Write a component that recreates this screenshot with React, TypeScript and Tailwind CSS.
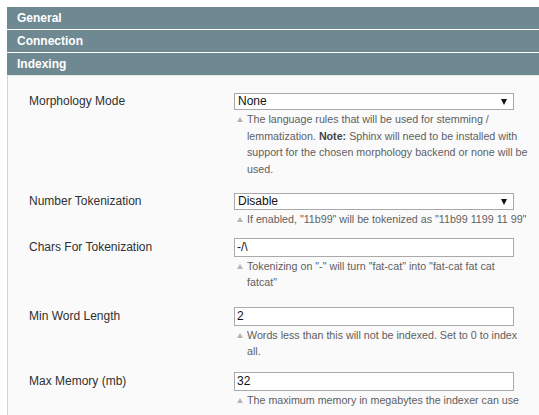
import React from "react";

type Row = {
  label: string;
  kind: "select" | "input";
  value: string;
  lines: React.ReactNode[];
  pad: string;
};

const rows: Row[] = [
  {
    label: "Morphology Mode",
    kind: "select",
    value: "None",
    lines: [
      "The language rules that will be used for stemming /",
      <>
        lemmatization. <b className="font-bold text-[#444]">Note:</b> Sphinx will need to be installed with
      </>,
      "support for the chosen morphology backend or none will be",
      "used.",
    ],
    pad: "pb-[16px]",
  },
  {
    label: "Number Tokenization",
    kind: "select",
    value: "Disable",
    lines: ['If enabled, "11b99" will be tokenized as "11b99 1199 11 99"'],
    pad: "pb-[10px]",
  },
  {
    label: "Chars For Tokenization",
    kind: "input",
    value: "-/\\",
    lines: ['Tokenizing on "-" will turn "fat-cat" into "fat-cat fat cat', 'fatcat"'],
    pad: "pb-[16px]",
  },
  {
    label: "Min Word Length",
    kind: "input",
    value: "2",
    lines: ["Words less than this will not be indexed. Set to 0 to index", "all."],
    pad: "pb-[12px]",
  },
  {
    label: "Max Memory (mb)",
    kind: "input",
    value: "32",
    lines: ["The maximum memory in megabytes the indexer can use"],
    pad: "pb-[10px]",
  },
];

function SectionBar({ title }: { title: string }) {
  return (
    <div className="h-[22px] bg-[#6f8992] pl-[10px] text-[12px] font-bold leading-[22px] text-white">
      {title}
    </div>
  );
}

function Field({ row }: { row: Row }) {
  if (row.kind === "select") {
    return (
      <div className="flex h-[17px] w-[280px] items-center justify-between border border-[#a9a9a9] bg-white pl-[3px] pr-[6px] text-[12px] leading-[15px] text-[#111]">
        <span>{row.value}</span>
        <span className="h-0 w-0 border-x-[3.5px] border-t-[6px] border-x-transparent border-t-[#111]" />
      </div>
    );
  }
  return (
    <div className="h-[19px] w-[280px] border border-[#aaaaaa] bg-white pl-[2px] text-[12px] leading-[17px] text-[#111]">
      {row.value}
    </div>
  );
}

export default function App() {
  return (
    <div
      className="min-h-[415px] bg-white pl-[7px] pt-[7px]"
      style={{ fontFamily: '"Liberation Sans", Arial, sans-serif' }}
    >
      <div className="flex flex-col gap-[1px]">
        <SectionBar title="General" />
        <SectionBar title="Connection" />
        <SectionBar title="Indexing" />
      </div>
      <div className="border-l border-t border-l-[#d4d4d4] border-t-[#e3e8ea] bg-[#fafafa] pl-[21px] pt-[17px]">
        {rows.map((row) => (
          <div key={row.label} className={`grid grid-cols-[205px_1fr] ${row.pad}`}>
            <div
              className={`text-[12px] text-[#303030] ${row.kind === "select" ? "leading-[17px]" : "leading-[19px]"}`}
            >
              {row.label}
            </div>
            <div>
              <Field row={row} />
              <div className="relative mt-[1px] pl-[13px] text-[10.7px] leading-[16.5px] text-[#5f5f5f]">
                <span className="absolute left-[3px] top-[6px] h-0 w-0 border-x-[3px] border-b-[5px] border-x-transparent border-b-[#b5b5b5]" />
                {row.lines.map((line, i) => (
                  <div key={i} className="whitespace-nowrap">
                    {line}
                  </div>
                ))}
              </div>
            </div>
          </div>
        ))}
      </div>
    </div>
  );
}
